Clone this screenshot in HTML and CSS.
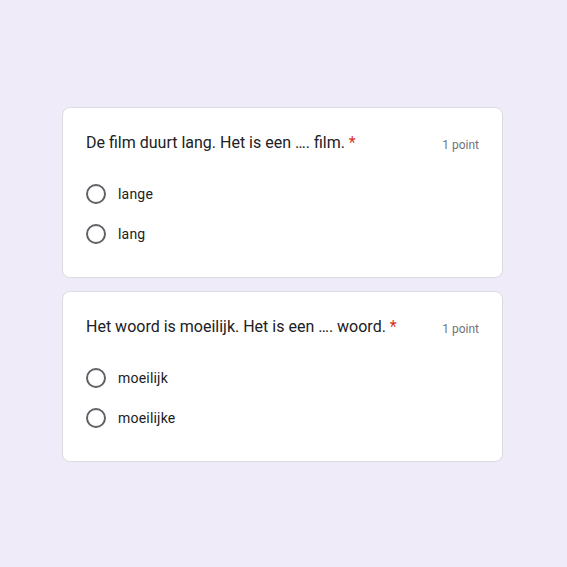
FILE: index.html
```html
<!DOCTYPE html>
<html>
<head>
<meta charset="utf-8">
<link rel="stylesheet" href="styles.css">
</head>
<body>
<main class="form">
  <section class="card">
    <div class="q-head">
      <div class="q-title">De film duurt lang. Het is een …. film. <span class="req">*</span></div>
      <div class="q-points">1 point</div>
    </div>
    <div class="options">
      <label class="option"><span class="radio"></span><span class="opt-text">lange</span></label>
      <label class="option"><span class="radio"></span><span class="opt-text">lang</span></label>
    </div>
  </section>
  <section class="card">
    <div class="q-head">
      <div class="q-title">Het woord is moeilijk. Het is een …. woord. <span class="req">*</span></div>
      <div class="q-points">1 point</div>
    </div>
    <div class="options">
      <label class="option"><span class="radio"></span><span class="opt-text">moeilijk</span></label>
      <label class="option"><span class="radio"></span><span class="opt-text">moeilijke</span></label>
    </div>
  </section>
</main>
</body>
</html>
```
FILE: styles.css
```css
html, body {
  margin: 0;
  padding: 0;
}
body {
  background: #f0ebf8;
  font-family: Roboto, "Liberation Sans", Arial, sans-serif;
  color: #202124;
  width: 567px;
  height: 567px;
}
.form {
  display: flex;
  flex-direction: column;
  gap: 13px;
  padding: 107px 64px 0 62px;
}
.card {
  background: #fff;
  border: 1px solid #dadce0;
  border-radius: 8px;
  padding: 23px 23px 23px 23px;
}
.q-head {
  display: flex;
  justify-content: space-between;
  align-items: baseline;
  height: 24px;
}
.q-title {
  font-size: 16px;
  line-height: 24px;
  letter-spacing: 0;
}
.req {
  color: #d93025;
}
.q-points {
  font-size: 12px;
  color: #70757a;
  letter-spacing: 0;
  position: relative;
  top: 1px;
}
.options {
  display: flex;
  flex-direction: column;
  margin-top: 19px;
}
.option {
  display: flex;
  align-items: center;
  height: 40px;
  gap: 12px;
}
.radio {
  box-sizing: border-box;
  width: 20px;
  height: 20px;
  border: 2px solid #5f6368;
  border-radius: 50%;
}
.opt-text {
  font-size: 14px;
  letter-spacing: 0.2px;
  color: #202124;
}
```
